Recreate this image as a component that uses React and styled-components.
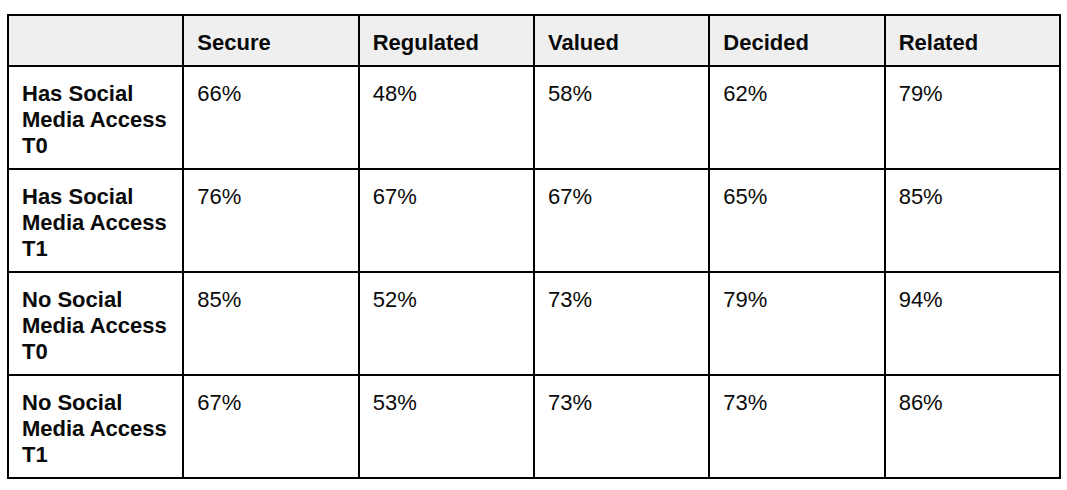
import styled, { createGlobalStyle } from "styled-components";

const GlobalStyle = createGlobalStyle`
    body {
        margin: 0;
        background: #ffffff;
        font-family: Arial, "Liberation Sans", sans-serif;
    }
`;

const columns = ["Secure", "Regulated", "Valued", "Decided", "Related"];

const rows = [
    { label: "Has Social Media Access T0", values: ["66%", "48%", "58%", "62%", "79%"] },
    { label: "Has Social Media Access T1", values: ["76%", "67%", "67%", "65%", "85%"] },
    { label: "No Social Media Access T0", values: ["85%", "52%", "73%", "79%", "94%"] },
    { label: "No Social Media Access T1", values: ["67%", "53%", "73%", "73%", "86%"] },
];

export default function App() {
    return (
        <Page>
            <GlobalStyle />
            <Table>
                <thead>
                    <tr>
                        <HeadCell />
                        {columns.map((c) => (
                            <HeadCell key={c}>{c}</HeadCell>
                        ))}
                    </tr>
                </thead>
                <tbody>
                    {rows.map((r) => (
                        <tr key={r.label}>
                            <Cell $label>{r.label}</Cell>
                            {r.values.map((v, i) => (
                                <Cell key={i}>{v}</Cell>
                            ))}
                        </tr>
                    ))}
                </tbody>
            </Table>
        </Page>
    );
}

const Page = styled.div`
    padding: 14px 6px 0 7px;
`;

const Table = styled.table`
    width: 100%;
    border-collapse: collapse;
    table-layout: fixed;
    border: 2px solid #000;
`;

const HeadCell = styled.th`
    background: #efefef;
    border: 2px solid #000;
    padding: 14px 12px 9px 13px;
    text-align: left;
    vertical-align: top;
    font-family: "Liberation Sans", Arial, sans-serif;
    font-weight: 700;
    font-size: 22px;
    line-height: 26px;
    color: #0a0a0a;
`;

const Cell = styled.td`
    border: 2px solid #000;
    padding: 14px 12px 9px 13px;
    height: 78px;
    text-align: left;
    vertical-align: top;
    font-family: "Liberation Sans", Arial, sans-serif;
    font-weight: ${(p) => (p.$label ? 700 : 400)};
    font-size: 22px;
    line-height: 26px;
    color: #0a0a0a;
`;
